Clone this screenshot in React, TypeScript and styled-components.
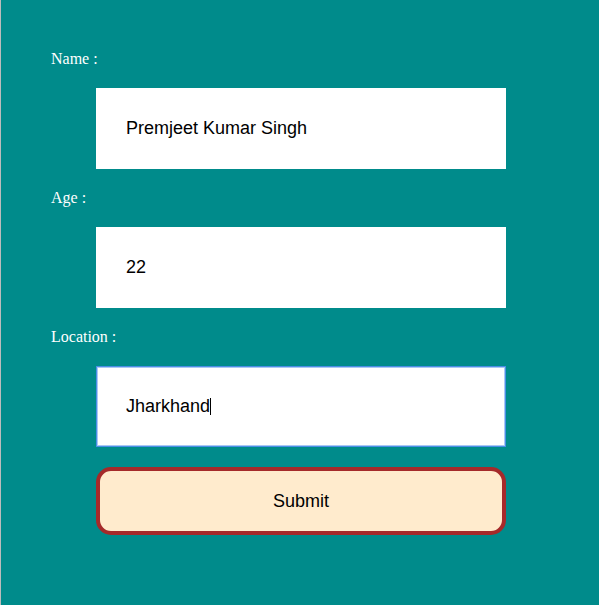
import React from "react";
import styled, { createGlobalStyle, css } from "styled-components";

const GlobalStyle = createGlobalStyle`
  html, body {
    margin: 0;
    padding: 0;
    background: #008b8b;
  }
  * { box-sizing: border-box; }
`;

const Page = styled.div`
  min-height: 100vh;
  background: #008b8b;
  border-left: 1px solid #bcbcbc;
  padding: 49px 0 0 50px;
  font-family: "Liberation Serif", "Times New Roman", serif;
`;

const Form = styled.form`
  display: flex;
  flex-direction: column;
  align-items: flex-start;
`;

const Label = styled.label`
  display: block;
  color: #ffffff;
  font-size: 16px;
  line-height: 18px;
  padding-top: 1px;
  margin-bottom: 20px;
`;

const FieldWrap = styled.div`
  position: relative;
  margin: 0 0 19px 45px;
`;

const Input = styled.input<{ $focused?: boolean }>`
  display: block;
  width: 410px;
  height: 81px;
  padding: 0 0 0 30px;
  border: none;
  outline: none;
  background: #ffffff;
  color: #000000;
  font-family: "Liberation Sans", Arial, sans-serif;
  font-size: 18px;
  ${(p) =>
    p.$focused &&
    css`
      caret-color: transparent;
      box-shadow: inset 0 0 0 1px #4a8ee6, inset 0 0 0 2px #a9c9f3;
    `}
`;

const Caret = styled.span`
  position: absolute;
  left: 114px;
  top: 32px;
  width: 1px;
  height: 17px;
  background: #000000;
`;

const SubmitButton = styled.button`
  margin: 1px 0 0 45px;
  width: 410px;
  height: 68px;
  border: 4px solid #a52a2a;
  border-radius: 15px;
  background: #ffebcd;
  color: #000000;
  font-family: "Liberation Sans", Arial, sans-serif;
  font-size: 18px;
  cursor: pointer;
`;

export default function App() {
  return (
    <>
      <GlobalStyle />
      <Page>
        <Form onSubmit={(e) => e.preventDefault()}>
          <Label htmlFor="name">Name :</Label>
          <FieldWrap>
            <Input id="name" defaultValue="Premjeet Kumar Singh" />
          </FieldWrap>
          <Label htmlFor="age">Age :</Label>
          <FieldWrap>
            <Input id="age" defaultValue="22" />
          </FieldWrap>
          <Label htmlFor="location">Location :</Label>
          <FieldWrap>
            <Input id="location" defaultValue="Jharkhand" $focused />
            <Caret />
          </FieldWrap>
          <SubmitButton type="submit">Submit</SubmitButton>
        </Form>
      </Page>
    </>
  );
}
